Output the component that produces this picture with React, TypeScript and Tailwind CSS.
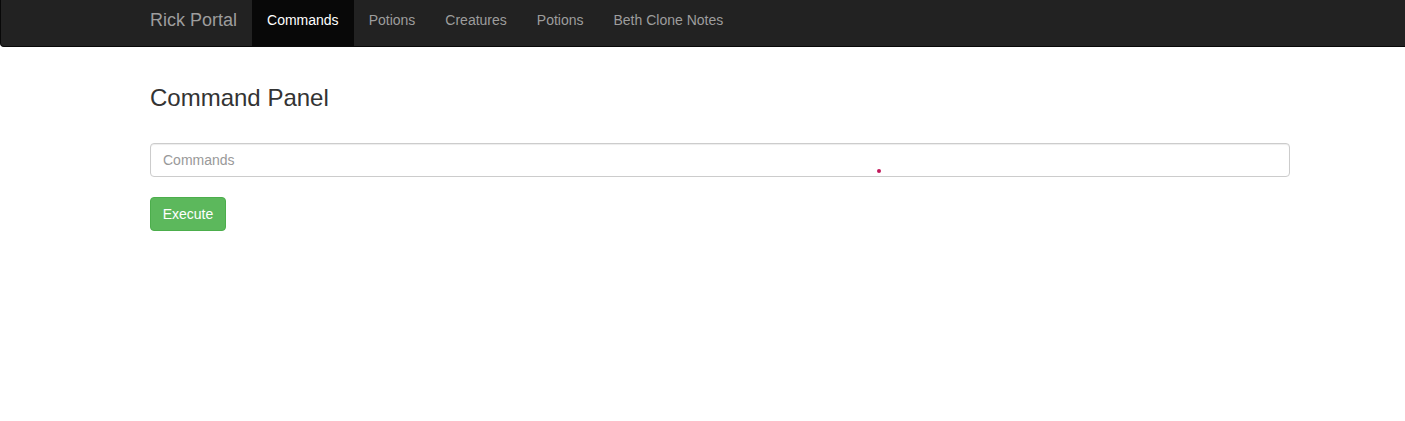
export default function App() {
  const links = ["Commands", "Potions", "Creatures", "Potions", "Beth Clone Notes"];

  return (
    <div
      className="relative min-h-[421px] w-full overflow-hidden bg-white text-[14px] text-[#333]"
      style={{ fontFamily: '"Liberation Sans", Arial, sans-serif' }}
    >
      {/* Navbar */}
      <nav className="h-[47px] w-[1440px] rounded-b-[4px] border-x border-b border-[#080808] bg-[#222]">
        <div className="ml-[134px] flex h-full w-[1170px]">
          <a className="h-full px-[15px] pt-[10px] text-[18px] leading-[20px] text-[#9d9d9d]">
            Rick Portal
          </a>
          <ul className="flex h-full">
            {links.map((l, i) => (
              <li key={i}>
                <a
                  className={`block h-full px-[15px] pt-[10px] leading-[20px] ${
                    i === 0 ? "bg-[#080808] text-white" : "text-[#9d9d9d]"
                  }`}
                >
                  {l}
                </a>
              </li>
            ))}
          </ul>
        </div>
      </nav>

      {/* Content */}
      <div className="ml-[150px] w-[1140px]">
        <h3 className="mt-[38px] text-[24px] font-normal leading-[26px]">Command Panel</h3>
        <input
          type="text"
          placeholder="Commands"
          className="mt-[32px] block h-[34px] w-full rounded-[4px] border border-[#ccc] px-[12px] pb-[1px] text-[14px] text-[#555] shadow-[inset_0_1px_1px_rgba(0,0,0,0.075)] outline-none placeholder:text-[#999]"
        />
        <button className="mt-[20px] h-[34px] w-[76px] rounded-[4px] border border-[#4cae4c] bg-[#5cb85c] text-[14px] leading-[20px] text-white">
          Execute
        </button>
      </div>

      <span className="absolute left-[877px] top-[169px] h-[4px] w-[4px] rounded-full bg-[#c2185b]" />
    </div>
  );
}
